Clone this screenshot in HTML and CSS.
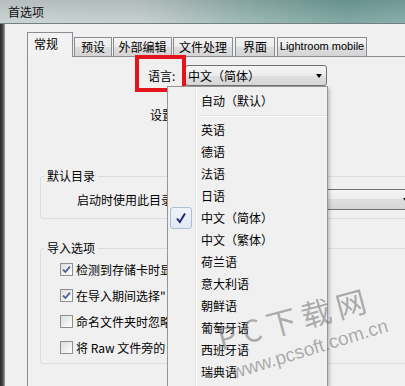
FILE: index.html
```html
<!DOCTYPE html>
<html>
<head lang="zh">
    <meta charset="UTF-8">
    <title>首选项</title>
<link rel="stylesheet" href="styles.css">
</head>
<body>
<div class="titlebar">首选项</div>
<div class="client">
    <div class="frame"></div>
    <div class="dialog">
        <div class="tabs">
            <div class="tab active">常规</div>
            <div class="tab w2">预设</div>
            <div class="tab w4">外部编辑</div>
            <div class="tab w4b">文件处理</div>
            <div class="tab w2b">界面</div>
            <div class="tab lr">Lightroom mobile</div>
        </div>
        <div class="panel">
            <div class="lang_row">
                <span class="label">语言:</span>
                <div class="combo lang_combo">中文（简体）<span class="arrow"></span></div>
                <div class="mark_red"></div>
            </div>
            <div class="set_row">设置...</div>
            <fieldset class="group catalog">
                <legend>默认目录</legend>
                <div class="row">
                    <span class="text">启动时使用此目录:</span>
                    <div class="combo wide_combo">加载最近打开的目录<span class="arrow"></span></div>
                </div>
            </fieldset>
            <fieldset class="group import">
                <legend>导入选项</legend>
                <div class="check_row">
                    <span class="box"><svg width="9" height="9" viewBox="0 0 9 9"><path d="M1 4.6 L3.4 7 L8 1.6" stroke="#4d5f98" stroke-width="1.8" fill="none"/></svg></span>
                    <span>检测到存储卡时显示导入对话框</span>
                </div>
                <div class="check_row">
                    <span class="box"><svg width="9" height="9" viewBox="0 0 9 9"><path d="M1 4.6 L3.4 7 L8 1.6" stroke="#4d5f98" stroke-width="1.8" fill="none"/></svg></span>
                    <span>在导入期间选择"当前/上一次导入"收藏夹</span>
                </div>
                <div class="check_row">
                    <span class="box"></span>
                    <span>命名文件夹时忽略相机生成的文件夹名</span>
                </div>
                <div class="check_row">
                    <span class="box"></span>
                    <span>将 Raw 文件旁的 JPEG 文件视为单独的照片</span>
                </div>
            </fieldset>
        </div>
    </div>
</div>
<div class="menu">
    <div class="item">自动（默认）</div>
    <div class="sep"></div>
    <div class="item">英语</div>
    <div class="item">德语</div>
    <div class="item">法语</div>
    <div class="item">日语</div>
    <div class="item checked">
        <span class="tick"><svg width="20" height="20" viewBox="0 0 20 20"><path d="M6 10.5 L8.8 14 L14 5.5" stroke="#1f2d6b" stroke-width="2" fill="none"/></svg></span>
        <span>中文（简体）</span>
    </div>
    <div class="item">中文（繁体）</div>
    <div class="item">荷兰语</div>
    <div class="item">意大利语</div>
    <div class="item">朝鲜语</div>
    <div class="item">葡萄牙语</div>
    <div class="item">西班牙语</div>
    <div class="item">瑞典语</div>
</div>
<div class="watermark">
    <span class="wm_big">PC下载网</span>
    <span class="wm_url">www.pcsoft.com.cn</span>
</div>
</body>
</html>
```

FILE: styles.css
```css
body {
	margin: 0;
	width: 405px;
	height: 386px;
	overflow: hidden;
	position: relative;
	background-color: #f0f0f0;
	font: 12px "Noto Sans CJK SC", sans-serif;
	color: #000;
}
.titlebar {
	height: 24px;
	box-sizing: border-box;
	padding-left: 8px;
	line-height: 23px;
	color: #111;
	border-bottom: 1px solid #71827f;
	background: linear-gradient(rgba(0, 0, 0, 0.08), rgba(255, 255, 255, 0.12)),
		linear-gradient(to right, #c6ced0 0%, #bfcaca 35%, #91b1ad 60%, #6f9d98 85%, #79a5a0 100%);
}
.client {
	display: flex;
	height: 362px;
}
.frame {
	width: 5px;
	background: linear-gradient(to right, #2a2a2a, #4a4a4a 55%, #a5a5a5);
}
.dialog {
	flex: 1;
	display: flex;
	flex-direction: column;
	padding: 8px 0 0 22px;
}
.tabs {
	display: flex;
	align-items: flex-end;
	height: 24px;
}
.tab {
	box-sizing: border-box;
	height: 19px;
	margin-left: 1px;
	border: 1px solid #898c95;
	border-bottom: none;
	text-align: center;
	line-height: 17px;
	white-space: nowrap;
	background: linear-gradient(#f3f3f3, #ebebeb 50%, #dedede 50%, #d4d4d4);
}
.tab.active {
	width: 46px;
	height: 25px;
	margin: 0 0 -1px 0;
	position: relative;
	text-align: left;
	padding-left: 6px;
	line-height: 22px;
	background: #f2f2f2;
}
.w2 { width: 38px; }
.w4 { width: 59px; }
.w4b { width: 60px; }
.w2b { width: 40px; margin-left: 2px; }
.lr {
	width: 90px;
	margin-left: 2px;
	font-family: "Liberation Sans", sans-serif;
	font-size: 11px;
}
.panel {
	flex: 1;
	border-top: 1px solid #898c95;
	border-left: 1px solid #898c95;
	background: #f0f0f0;
	padding-top: 8px;
}
.lang_row {
	display: flex;
	align-items: center;
	margin-left: 120px;
	position: relative;
}
.lang_row .label {
	width: 28px;
	margin-right: 9px;
}
.combo {
	box-sizing: border-box;
	height: 21px;
	display: flex;
	align-items: center;
	justify-content: space-between;
	padding: 0 4px 0 2px;
	border: 1px solid #707070;
	border-radius: 3px;
	background: linear-gradient(#f5f5f5, #ececec 50%, #dfdfdf 50%, #d6d6d6);
}
.lang_combo {
	width: 142px;
}
.arrow {
	width: 0;
	height: 0;
	border-left: 3.5px solid transparent;
	border-right: 3.5px solid transparent;
	border-top: 4px solid #000;
}
.mark_red {
	position: absolute;
	left: -13px;
	top: -10px;
	width: 51px;
	height: 37px;
	box-sizing: border-box;
	border: 4px solid #e3141b;
}
.set_row {
	margin: 21px 0 0 122px;
	line-height: 16px;
}
.group {
	margin: 0 -10px 0 12px;
	padding: 0;
	border: 1px solid #d5dfe5;
	border-radius: 3px;
}
.group legend {
	margin-left: 3px;
	padding: 0 3px;
	line-height: 16px;
}
.catalog {
	margin-top: 45px;
	padding-bottom: 8px;
}
.catalog .row {
	display: flex;
	align-items: center;
	margin-top: 5px;
	padding-left: 36px;
}
.catalog .text {
	margin-right: 10px;
}
.wide_combo {
	flex: 1;
}
.import {
	margin-top: 21px;
	padding-bottom: 3px;
}
.check_row {
	display: flex;
	align-items: center;
	height: 26px;
	padding-left: 19px;
	white-space: nowrap;
}
.box {
	box-sizing: border-box;
	width: 13px;
	height: 13px;
	margin-right: 3px;
	display: flex;
	align-items: center;
	justify-content: center;
	border: 1px solid #8e8f8f;
	background: linear-gradient(135deg, #dcdcdc, #f4f4f4 70%, #fff);
}
.menu {
	position: absolute;
	left: 167px;
	top: 86px;
	width: 161px;
	height: 300px;
	box-sizing: border-box;
	padding-top: 3px;
	border: 1px solid #979797;
	border-bottom: none;
	background: linear-gradient(to right, transparent 27px, #e2e3e3 27px, #e2e3e3 28px, #fff 28px, #fff 29px, transparent 29px), #f0f0f0;
	box-shadow: 2px 2px 3px rgba(0, 0, 0, 0.2);
}
.item {
	height: 22px;
	line-height: 22px;
	padding-left: 33px;
}
.item.checked {
	display: flex;
	align-items: center;
	padding-left: 2px;
}
.tick {
	box-sizing: border-box;
	width: 22px;
	height: 22px;
	margin-right: 9px;
	display: flex;
	align-items: center;
	justify-content: center;
	border: 1px solid #aebdd3;
	border-radius: 3px;
	background: linear-gradient(#eef2f8, #e2e9f3);
}
.sep {
	height: 1px;
	margin: 3px 0 2px 31px;
	background: #e0e0e0;
	border-bottom: 1px solid #fff;
}
.watermark {
	position: absolute;
	left: 0;
	top: 0;
	width: 405px;
	height: 386px;
	overflow: hidden;
	pointer-events: none;
	color: rgba(110, 110, 110, 0.55);
}
.wm_big {
	position: absolute;
	left: 218px;
	top: 316px;
	font: 30px "Noto Sans CJK SC", sans-serif;
	letter-spacing: 6px;
	transform: rotate(-15deg);
	transform-origin: left center;
	white-space: nowrap;
}
.wm_url {
	position: absolute;
	left: 232px;
	top: 362px;
	font: 19px "Liberation Sans", sans-serif;
	transform: rotate(-17deg);
	transform-origin: left center;
	white-space: nowrap;
}
```
